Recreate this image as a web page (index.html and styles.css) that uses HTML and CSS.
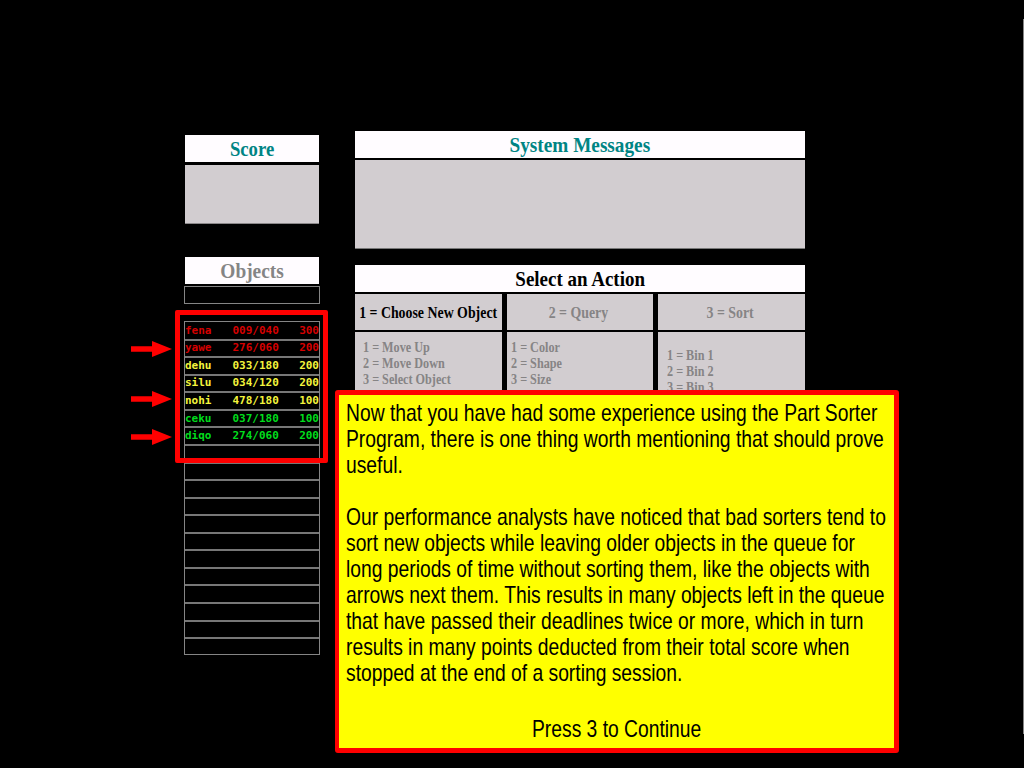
FILE: index.html
```html
<!DOCTYPE html>
<html lang="en">
<head>
<meta charset="utf-8">
<title>Part Sorter</title>
<link rel="stylesheet" href="styles.css">
</head>
<body>
<main class="screen">
  <div class="left">
    <h2 class="title teal"><span class="score-title">Score</span></h2>
    <div class="score-box"></div>
    <h2 class="title gray objects"><span class="objects-title">Objects</span></h2>
    <div class="current"></div>
    <div class="queue">
      <div class="row red"><span>fena</span><span>009/040</span><span>300</span></div>
      <div class="row red"><span>yawe</span><span>276/060</span><span>200</span></div>
      <div class="row yellow"><span>dehu</span><span>033/180</span><span>200</span></div>
      <div class="row yellow"><span>silu</span><span>034/120</span><span>200</span></div>
      <div class="row yellow"><span>nohi</span><span>478/180</span><span>100</span></div>
      <div class="row green"><span>ceku</span><span>037/180</span><span>100</span></div>
      <div class="row green"><span>diqo</span><span>274/060</span><span>200</span></div>
      <div class="row"></div><div class="row"></div><div class="row"></div><div class="row"></div>
      <div class="row"></div><div class="row"></div><div class="row"></div><div class="row"></div>
      <div class="row"></div><div class="row"></div><div class="row"></div><div class="row"></div>
    </div>
  </div>
  <div class="right">
    <h2 class="title teal messages"><span class="messages-title">System Messages</span></h2>
    <div class="message-box"></div>
    <h2 class="title action"><span class="action-title">Select an Action</span></h2>
    <div class="actions">
      <div class="choice active"><span>1 = Choose New Object</span></div>
      <div class="choice query"><span>2 = Query</span></div>
      <div class="choice sort"><span>3 = Sort</span></div>
      <div class="menu first"><p>1 = Move Up</p><p>2 = Move Down</p><p>3 = Select Object</p></div>
      <div class="menu second"><p>1 = Color</p><p>2 = Shape</p><p>3 = Size</p></div>
      <div class="menu third"><p>1 = Bin 1</p><p>2 = Bin 2</p><p>3 = Bin 3</p></div>
    </div>
  </div>
  <div class="highlight"></div>
  <svg class="arrow arrow-one" viewBox="0 0 41 16"><path d="M0 5.3h21V0l20 8-20 8v-5.3H0z"/></svg>
  <svg class="arrow arrow-two" viewBox="0 0 41 16"><path d="M0 5.3h21V0l20 8-20 8v-5.3H0z"/></svg>
  <svg class="arrow arrow-three" viewBox="0 0 41 16"><path d="M0 5.3h21V0l20 8-20 8v-5.3H0z"/></svg>
  <section class="popup">
    <p>Now that you have had some experience using the Part Sorter</p>
    <p>Program, there is one thing worth mentioning that should prove</p>
    <p>useful.</p>
    <p class="gap">Our performance analysts have noticed that bad sorters tend to</p>
    <p>sort new objects while leaving older objects in the queue for</p>
    <p>long periods of time without sorting them, like the objects with</p>
    <p>arrows next them. This results in many objects left in the queue</p>
    <p>that have passed their deadlines twice or more, which in turn</p>
    <p>results in many points deducted from their total score when</p>
    <p>stopped at the end of a sorting session.</p>
    <p class="continue">Press 3 to Continue</p>
  </section>
  <div class="edge"></div>
</main>
</body>
</html>
```
FILE: styles.css
```css
* { box-sizing: border-box; }
body { margin: 0; background: #000; }
p, h2 { margin: 0; }
.screen {
  position: relative; width: 1024px; height: 768px; overflow: hidden;
  display: flex; align-items: flex-start; gap: 35px; padding: 131px 0 0 184px;
  background: #000; color: #000; font-family: "Liberation Serif", serif;
}
.left { width: 136px; padding-top: 4px; }
.right { width: 450px; }
.title {
  height: 27px; display: flex; align-items: center; justify-content: center;
  background: #fffcff; font-size: 22px; line-height: 26px; white-space: nowrap;
}
.left .title, .score-box { margin-left: 1px; margin-right: 1px; }
.title span { display: inline-block; }
.teal { color: #008484; }
.gray { color: #858585; }
.score-title { transform: scaleX(.85); }
.objects-title { transform: scaleX(.88); }
.messages-title { transform: translateX(-.5px) scaleX(.875); }
.action-title { transform: scaleX(.862); }
.score-box { margin-top: 3px; height: 59px; background: #d2cdd0; border-bottom: 1px solid #8b888a; }
.left .objects { margin-top: 33px; }
.current { margin-top: 2px; height: 18px; border: 1px solid #858585; }
.queue { margin-top: 17px; height: 334px; display: grid; grid-template-rows: repeat(18, 17.57px) 1fr; border: 1px solid #858585; padding-top: 1px; }
.row {
  display: grid; grid-template-columns: 47.5px 1fr auto; align-items: center;
  border-bottom: 2px solid #777;
  font: bold 11px/14px "DejaVu Sans Mono", monospace;
}
.row:last-child { border-bottom: 0; }
.red { color: #d50000; }
.yellow { color: #f4f43c; }
.green { color: #00dc1c; }
.messages { height: 27px; }
.message-box { margin-top: 2px; height: 89px; background: #d2cdd0; border-bottom: 1px solid #777; }
.action { margin-top: 16px; }
.actions {
  margin-top: 2px; display: grid; grid-template-columns: 147px 146px 147px; column-gap: 5px;
  grid-template-rows: 36px 70px; row-gap: 2px; font-weight: bold; color: #868485; white-space: nowrap;
}
.choice { display: flex; align-items: center; justify-content: center; background: #d2cdd0; font-size: 16.5px; padding-top: 1px; }
.choice span { transform: scaleX(.84); }
.active { color: #000; }
.active span { margin: 0 -20px; }
.query { padding-right: 4px; }
.sort { padding-right: 3px; }
.menu { background: #d2cdd0; padding: 7.4px 0 0 8px; font-size: 14.5px; line-height: 16px; }
.menu p { transform: scaleX(.84); transform-origin: left; }
.second { padding-left: 4px; }
.third { padding: 15.4px 0 0 9px; }
.highlight { position: absolute; left: 175px; top: 310px; width: 153px; height: 153px; border: 5px solid #f00; border-radius: 2px; }
.arrow { position: absolute; left: 131px; width: 41px; height: 16px; fill: #f00; }
.arrow-one { top: 341px; }
.arrow-two { top: 391px; }
.arrow-three { top: 429px; }
.popup {
  position: absolute; left: 335px; top: 390px; width: 564px; height: 363px;
  border: 5px solid #f00; border-left-width: 4px; border-radius: 3px; background: #ff0; padding: 5px 0 0 7px;
  font: 24px/26.05px "Liberation Sans", Arial, sans-serif; white-space: nowrap;
}
.popup p { width: max-content; transform: scaleX(.803); transform-origin: left; }
.popup .gap { margin-top: 26.05px; }
.popup .continue { margin: 29px 0 0 186px; }
.edge { position: absolute; right: 0; top: 19px; width: 1px; height: 715px; background: #858585; }
```
